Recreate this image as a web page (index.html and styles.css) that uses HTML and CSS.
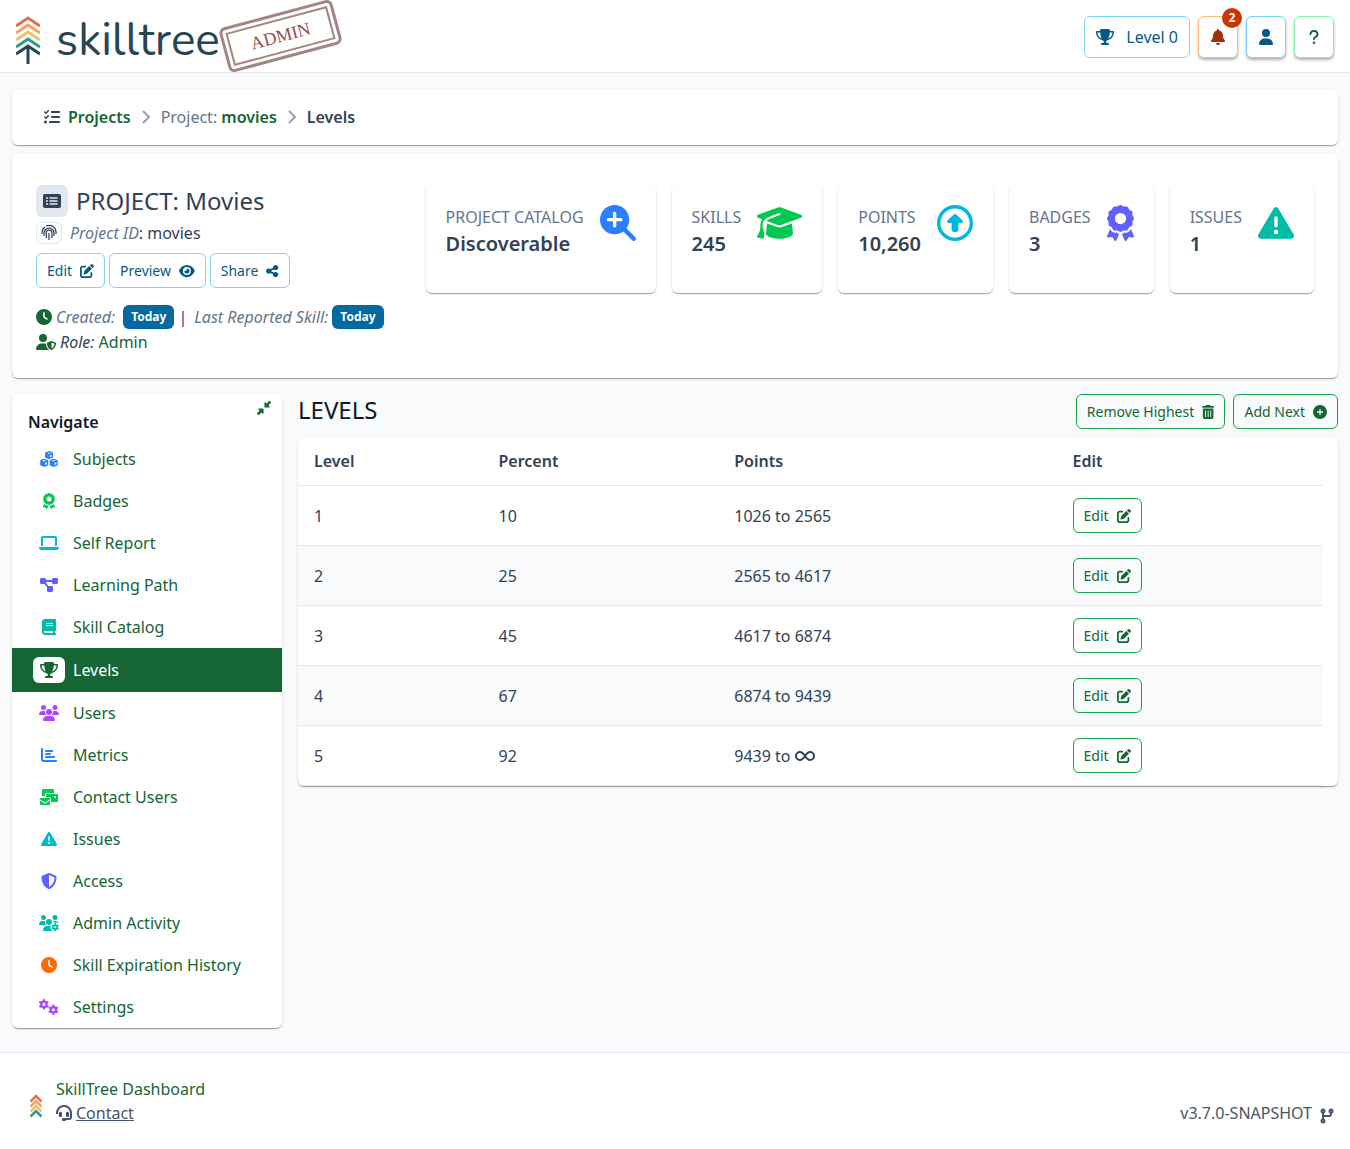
FILE: index.html
```
<!DOCTYPE html>
<html lang="en">
<head>
  <meta charset="UTF-8">
  <title>Levels - SkillTree Dashboard</title>
  <link rel="stylesheet" href="styles.css">
</head>
<body>

  <svg class="sprite" aria-hidden="true">
    <defs>
      <path id="i-trophy" d="M400 0H176c-26.500 0-48.100 21.800-47.100 48.200c.2 5.300 .4 10.600 .7 15.800H24C10.700 64 0 74.700 0 88c0 92.600 33.500 157 78.500 200.700c44.300 43.100 98.300 64.800 138.100 75.800c23.400 6.500 39.400 26 39.400 45.600c0 20.900-17 37.900-37.900 37.900H192c-17.700 0-32 14.300-32 32s14.300 32 32 32H384c17.700 0 32-14.300 32-32s-14.300-32-32-32H357.900C337 448 320 431 320 410.100c0-19.600 15.900-39.200 39.400-45.600c39.900-11 93.900-32.700 138.200-75.800C542.500 245 576 180.600 576 88c0-13.300-10.700-24-24-24H446.400c.3-5.200 .5-10.400 .7-15.800C448.100 21.800 426.500 0 400 0zM48.900 112h84.400c9.100 90.100 29.200 150.300 51.900 190.600c-24.900-11-50.800-26.500-73.200-48.300c-32-31.100-58-76-63-142.300zM464.100 254.300c-22.400 21.800-48.300 37.300-73.200 48.300c22.700-40.300 42.800-100.500 51.900-190.600h84.400c-5.100 66.300-31.100 111.200-63 142.300z"/>
      <path id="i-pen" d="M471.600 21.700c-21.900-21.900-57.300-21.900-79.200 0L362.300 51.700l97.900 97.900 30.100-30.100c21.900-21.900 21.900-57.300 0-79.200L471.600 21.700zm-299.200 220c-6.100 6.100-10.800 13.600-13.500 21.900l-29.600 88.800c-2.900 8.600-.6 18.100 5.800 24.600s15.900 8.700 24.600 5.800l88.800-29.600c8.200-2.700 15.700-7.400 21.900-13.500L437.700 172.300 339.700 74.300 172.400 241.700zM96 64C43 64 0 107 0 160V416c0 53 43 96 96 96H352c53 0 96-43 96-96V320c0-17.700-14.300-32-32-32s-32 14.300-32 32v96c0 17.700-14.300 32-32 32H96c-17.700 0-32-14.300-32-32V160c0-17.700 14.300-32 32-32h96c17.700 0 32-14.300 32-32s-14.300-32-32-32H96z"/>
      <path id="i-award" d="M173.800 5.500c11-7.300 25.400-7.300 36.400 0L228 17.200c6 3.900 13 5.800 20.100 5.400l21.300-1.300c13.200-.8 25.600 6.400 31.500 18.200l9.600 19.100c3.200 6.400 8.400 11.500 14.700 14.700L344.500 83c11.800 5.900 19 18.300 18.200 31.500l-1.300 21.300c-.4 7.100 1.500 14.200 5.400 20.100l11.800 17.800c7.300 11 7.300 25.400 0 36.400L366.800 228c-3.900 6-5.800 13-5.400 20.100l1.300 21.300c.8 13.200-6.400 25.600-18.200 31.500l-19.100 9.600c-6.400 3.200-11.500 8.400-14.700 14.700L301 344.500c-5.900 11.800-18.300 19-31.500 18.200l-21.300-1.300c-7.100-.4-14.200 1.500-20.100 5.400l-17.800 11.800c-11 7.300-25.400 7.300-36.400 0L156 366.800c-6-3.900-13-5.800-20.100-5.400l-21.300 1.300c-13.200 .8-25.600-6.400-31.500-18.200l-9.600-19.100c-3.200-6.400-8.400-11.500-14.700-14.700L39.500 301c-11.800-5.900-19-18.300-18.200-31.500l1.300-21.300c.4-7.100-1.500-14.200-5.400-20.100L5.500 210.200c-7.300-11-7.300-25.400 0-36.400L17.200 156c3.900-6 5.800-13 5.400-20.100l-1.300-21.300c-.8-13.200 6.400-25.600 18.200-31.500l19.100-9.600C65 70.200 70.200 65 73.400 58.600L83 39.500c5.900-11.800 18.300-19 31.500-18.200l21.300 1.300c7.100 .4 14.200-1.500 20.100-5.400L173.800 5.500zM272 192a80 80 0 1 0-160 0 80 80 0 1 0 160 0zM1.300 441.800L44.400 339.300c.2 .1 .3 .2 .4 .4l9.600 19.100c11.700 23.200 36 37.300 62 35.800l21.300-1.300c.2 0 .5 0 .7 .2l17.800 11.800c5.100 3.300 10.500 5.900 16.100 7.700l-37.600 89.300c-2.300 5.500-7.400 9.200-13.300 9.700s-11.600-2.200-14.800-7.200L74.400 455.500l-56.100 8.300c-5.700 .8-11.400-1.500-15-6s-4.300-10.700-2.100-16zm248 60.400L211.700 413c5.600-1.800 11-4.300 16.100-7.700l17.800-11.800c.2-.1 .4-.2 .7-.2l21.300 1.300c26 1.500 50.300-12.600 62-35.800l9.600-19.100c.1-.2 .2-.3 .4-.4l43.200 102.500c2.200 5.300 1.400 11.400-2.100 16s-9.300 6.900-15 6l-56.100-8.300-32.200 49.200c-3.200 5-8.900 7.700-14.800 7.200s-11-4.300-13.300-9.700z"/>
      <path id="i-warning" d="M256 32c14.200 0 27.300 7.500 34.500 19.800l216 368c7.300 12.400 7.300 27.700 .2 40.100S486.300 480 472 480H40c-14.300 0-27.600-7.700-34.700-20.100s-7-27.800 .2-40.100l216-368C228.700 39.500 241.800 32 256 32zm0 128c-13.300 0-24 10.700-24 24V296c0 13.300 10.700 24 24 24s24-10.700 24-24V184c0-13.300-10.700-24-24-24zm32 224a32 32 0 1 0-64 0 32 32 0 1 0 64 0z"/>
      <path id="i-clock" d="M256 0a256 256 0 1 1 0 512A256 256 0 1 1 256 0zM232 120V256c0 8 4 15.500 10.700 20l96 64c11 7.400 25.900 4.400 33.300-6.700s4.400-25.900-6.700-33.300L280 243.200V120c0-13.300-10.700-24-24-24s-24 10.700-24 24z"/>
      <g id="i-gear">
        <circle cx="100" cy="100" r="52" fill="none" stroke="currentColor" stroke-width="44"/>
        <g stroke="currentColor" stroke-width="44" stroke-linecap="round">
          <path d="M100 30V18M100 170V182M39 65L29 59M161 135L171 141M39 135L29 141M161 65L171 59"/>
        </g>
      </g>
      <g id="i-cube">
        <path fill="currentColor" d="M128 0L240 44Q256 52 256 70V192Q256 208 242 216L144 258Q128 264 112 258L14 216Q0 208 0 192V70Q0 52 16 44Z"/>
        <path fill="#fff" d="M128 46L184 68L128 90L72 68ZM156 140L214 116V176L156 202Z"/>
      </g>
      <g id="i-chevrons" fill="none" stroke-width="3">
        <path stroke="#e76f51" d="M0 10L12 2L24 10"/>
        <path stroke="#f4a261" d="M0 17L12 9L24 17"/>
        <path stroke="#e9c46a" d="M0 24L12 16L24 24"/>
        <path stroke="#2a9d8f" d="M0 31L12 23L24 31"/>
      </g>
    </defs>
  </svg>

  <header class="topbar">
    <a class="brand" href="#">
      <svg class="brand-mark" viewBox="0 0 24 48" aria-hidden="true">
        <use href="#i-chevrons"/>
        <path d="M0 38L12 30L24 38M12 31V48" fill="none" stroke="#264653" stroke-width="3"/>
      </svg>
      <span class="brand-name">skilltree</span>
      <span class="stamp"><span>ADMIN</span></span>
    </a>
    <div class="topbar-actions">
      <button type="button" class="btn-top level">
        <svg viewBox="0 0 576 512"><use href="#i-trophy"/></svg>
        Level 0
      </button>
      <button type="button" class="btn-top square alert" aria-label="Notifications">
        <svg viewBox="0 0 448 512"><path d="M224 0c-17.700 0-32 14.300-32 32V51.200C119 66 64 130.600 64 208v18.800c0 47-17.300 92.400-48.500 127.600l-7.400 8.300c-8.400 9.400-10.400 22.900-5.300 34.400S19.400 416 32 416H416c12.600 0 24-7.400 29.200-18.900s3.100-25-5.300-34.400l-7.400-8.300C401.300 319.200 384 273.900 384 226.800V208c0-77.400-55-142-128-156.800V32c0-17.700-14.300-32-32-32zm45.300 493.300c12-12 18.700-28.300 18.700-45.300H160c0 17 6.700 33.300 18.700 45.300s28.300 18.700 45.300 18.700s33.300-6.700 45.300-18.700z"/></svg>
        <span class="count">2</span>
      </button>
      <button type="button" class="btn-top square" aria-label="User">
        <svg viewBox="0 0 448 512"><path d="M224 256A128 128 0 1 0 224 0a128 128 0 1 0 0 256zm-45.700 48C79.800 304 0 383.800 0 482.300C0 498.700 13.300 512 29.700 512H418.300c16.400 0 29.700-13.300 29.700-29.700C448 383.800 368.200 304 269.700 304H178.300z"/></svg>
      </button>
      <button type="button" class="btn-top square help" aria-label="Help">
        <svg viewBox="0 0 320 512"><path d="M80 160c0-35.300 28.700-64 64-64h32c35.300 0 64 28.700 64 64v3.600c0 21.800-11.100 42.100-29.400 53.800l-42.200 27.100c-25.200 16.200-40.400 44.100-40.400 74V320c0 17.700 14.300 32 32 32s32-14.300 32-32v-1.400c0-8.200 4.200-15.800 11-20.200l42.200-27.100c36.600-23.600 58.800-64.100 58.800-107.700V160c0-70.700-57.300-128-128-128H144C73.300 32 16 89.300 16 160c0 17.700 14.300 32 32 32s32-14.300 32-32zm80 320a40 40 0 1 0 0-80 40 40 0 1 0 0 80z"/></svg>
      </button>
    </div>
  </header>

  <nav class="card breadcrumb" aria-label="Breadcrumb">
    <svg viewBox="0 0 512 512"><path d="M152.100 38.200c9.900 8.900 10.700 24 1.800 33.900l-72 80c-4.400 4.900-10.600 7.800-17.200 7.900s-12.900-2.400-17.600-7L7 113C-2.300 103.600-2.300 88.400 7 79s24.600-9.400 33.900 0l22.100 22.100 55.100-61.200c8.900-9.900 24-10.700 33.900-1.800zm0 160c9.900 8.900 10.700 24 1.800 33.900l-72 80c-4.400 4.900-10.600 7.800-17.200 7.900s-12.900-2.400-17.600-7L7 273c-9.400-9.400-9.400-24.600 0-33.900s24.600-9.400 33.900 0l22.100 22.100 55.100-61.200c8.900-9.900 24-10.700 33.900-1.800zM224 96c0-17.700 14.300-32 32-32H480c17.700 0 32 14.300 32 32s-14.300 32-32 32H256c-17.700 0-32-14.300-32-32zm0 160c0-17.700 14.300-32 32-32H480c17.700 0 32 14.300 32 32s-14.300 32-32 32H256c-17.700 0-32-14.300-32-32zM160 416c0-17.700 14.300-32 32-32H480c17.700 0 32 14.300 32 32s-14.300 32-32 32H192c-17.700 0-32-14.300-32-32zM48 368a48 48 0 1 1 0 96 48 48 0 1 1 0-96z"/></svg>
    <a href="#">Projects</a>
    <svg class="sep" viewBox="0 0 8 14"><path d="M1 1L7 7L1 13"/></svg>
    <span class="crumb">Project: <a href="#">movies</a></span>
    <svg class="sep" viewBox="0 0 8 14"><path d="M1 1L7 7L1 13"/></svg>
    <span>Levels</span>
  </nav>

  <section class="card project">
    <div class="project-info">
      <h1>
        <span class="title-icon"><svg viewBox="0 0 576 512"><path fill-rule="evenodd" d="M0 96C0 60.700 28.700 32 64 32H512c35.300 0 64 28.700 64 64V416c0 35.300-28.700 64-64 64H64c-35.300 0-64-28.700-64-64V96zM128 288a32 32 0 1 0 0-64 32 32 0 1 0 0 64zm32-128a32 32 0 1 0-64 0 32 32 0 1 0 64 0zM128 384a32 32 0 1 0 0-64 32 32 0 1 0 0 64zM224 136c-13.300 0-24 10.700-24 24s10.700 24 24 24H448c13.300 0 24-10.700 24-24s-10.700-24-24-24zM224 232c-13.300 0-24 10.700-24 24s10.700 24 24 24H448c13.300 0 24-10.700 24-24s-10.700-24-24-24zM224 328c-13.300 0-24 10.700-24 24s10.700 24 24 24H448c13.300 0 24-10.700 24-24s-10.700-24-24-24z"/></svg></span>
        PROJECT: Movies
      </h1>
      <div class="project-id">
        <span class="id-icon">
          <svg viewBox="0 0 16 16"><path class="line" d="M1 9V7A7 7 0 0 1 4 2M5 1A7 7 0 0 1 15 7V9M3 11V8A5 5 0 0 1 8 3A5 5 0 0 1 13 8V11M5 13Q6 11 5 8A3 3 0 0 1 11 8V13M8 8V15"/></svg>
        </span>
        <span><em>Project ID</em>: movies</span>
      </div>
      <div class="project-actions">
        <button type="button" class="btn sky">Edit <svg viewBox="0 0 512 512"><use href="#i-pen"/></svg></button>
        <button type="button" class="btn sky">Preview <svg viewBox="0 0 576 512"><path d="M288 32c-80.800 0-145.500 36.800-192.600 80.600C48.600 156 17.300 208 2.500 243.700c-3.300 7.900-3.300 16.700 0 24.600C17.300 304 48.600 356 95.400 399.400C142.500 443.200 207.200 480 288 480s145.500-36.800 192.600-80.600c46.800-43.500 78.100-95.400 93-131.100c3.300-7.900 3.300-16.700 0-24.600c-14.900-35.700-46.200-87.700-93-131.100C433.500 68.800 368.800 32 288 32zM144 256a144 144 0 1 1 288 0 144 144 0 1 1-288 0zm144-64c0 35.300-28.700 64-64 64c-7.100 0-13.900-1.200-20.300-3.300c-5.500-1.800-11.900 1.600-11.700 7.400c.3 6.900 1.300 13.800 3.200 20.700c13.700 51.200 66.400 81.600 117.600 67.900s81.600-66.400 67.900-117.600c-11.100-41.500-47.800-69.400-88.600-71.100c-5.800-.2-9.200 6.100-7.400 11.700c2.100 6.400 3.300 13.200 3.300 20.300z"/></svg></button>
        <button type="button" class="btn sky">Share <svg viewBox="0 0 448 512"><path d="M352 224c53 0 96-43 96-96s-43-96-96-96s-96 43-96 96c0 4 .2 8 .7 11.900l-94.100 47C145.400 170.200 121.900 160 96 160c-53 0-96 43-96 96s43 96 96 96c25.900 0 49.400-10.200 66.600-26.900l94.100 47c-.5 3.900-.7 7.800-.7 11.900c0 53 43 96 96 96s96-43 96-96s-43-96-96-96c-25.900 0-49.400 10.200-66.600 26.900l-94.100-47c.5-3.900 .7-7.800 .7-11.900s-.2-8-.7-11.900l94.100-47C302.600 213.800 326.100 224 352 224z"/></svg></button>
      </div>
      <div class="project-dates">
        <svg class="green" viewBox="0 0 512 512"><use href="#i-clock"/></svg>
        <em class="created">Created:</em>
        <span class="tag">Today</span>
        <span class="bar">|</span>
        <em>Last Reported Skill:</em>
        <span class="tag">Today</span>
      </div>
      <div class="project-role">
        <svg class="green" viewBox="0 0 640 512"><path d="M224 256A128 128 0 1 0 224 0a128 128 0 1 0 0 256zm-45.700 48C79.800 304 0 383.800 0 482.300C0 498.700 13.300 512 29.700 512H418.300c1.800 0 3.500-.2 5.300-.5c-76.300-55.100-99.800-141-103.100-200.200c-16.100-4.800-33.100-7.300-50.700-7.300H178.300zm308.800-78.300l-120 48C358 277.400 352 286.200 352 296c0 63.300 25.900 168.800 134.800 214.200c5.900 2.500 12.600 2.500 18.500 0C614.100 464.800 640 359.300 640 296c0-9.800-6-18.600-15.100-22.300l-120-48c-5.700-2.300-12.100-2.300-17.800 0zM591.400 312c-3.900 50.700-27.200 116.700-95.400 149.700V273.800L591.400 312z"/></svg>
        <span><i>Role:</i> <span class="green">Admin</span></span>
      </div>
    </div>

    <div class="stats">
      <div class="stat">
        <div><span>PROJECT CATALOG</span><strong>Discoverable</strong></div>
        <svg class="blue" viewBox="0 0 512 512"><path d="M416 208c0 45.900-14.900 88.300-40 122.700L502.600 457.400c12.500 12.500 12.500 32.800 0 45.300s-32.800 12.500-45.300 0L330.700 376c-34.400 25.200-76.800 40-122.700 40C93.100 416 0 322.900 0 208S93.100 0 208 0S416 93.100 416 208zM184 296c0 13.300 10.700 24 24 24s24-10.700 24-24V232h64c13.300 0 24-10.700 24-24s-10.700-24-24-24H232V120c0-13.300-10.700-24-24-24s-24 10.700-24 24v64H120c-13.300 0-24 10.700-24 24s10.700 24 24 24h64v64z"/></svg>
      </div>
      <div class="stat">
        <div><span>SKILLS</span><strong>245</strong></div>
        <svg class="lime" viewBox="0 0 640 512"><path d="M320 32c-8.100 0-16.100 1.400-23.700 4.100L15.800 137.400C6.300 140.900 0 149.900 0 160s6.300 19.100 15.800 22.600l57.900 20.900C57.300 229.300 48 259.800 48 291.900v28.100c0 28.400-10.800 57.700-22.300 80.800c-6.500 13-13.900 25.800-22.500 37.600C0 442.700-.9 448.300 .9 453.400s6 8.900 11.200 10.200l64 16c4.200 1.100 8.700 .3 12.400-2s6.300-6.100 7.100-10.400c8.600-42.800 4.300-81.200-2.100-108.700C90.300 344.300 86 329.800 80 316.500V291.900c0-30.200 10.200-58.700 27.900-81.500c12.900-15.500 29.600-28 49.200-35.700l157-61.700c8.200-3.200 17.500 .8 20.700 9s-.8 17.500-9 20.700l-157 61.700c-12.400 4.900-23.300 12.400-32.200 21.600l159.600 57.600c7.600 2.700 15.600 4.100 23.700 4.100s16.100-1.400 23.700-4.100L624.200 182.600c9.500-3.400 15.800-12.500 15.800-22.600s-6.300-19.100-15.800-22.600L343.700 36.100C336.100 33.400 328.100 32 320 32zM128 408c0 35.300 86 72 192 72s192-36.700 192-72L496.700 262.600 354.500 314c-11.100 4-22.800 6-34.500 6s-23.500-2-34.500-6L143.300 262.600 128 408z"/></svg>
      </div>
      <div class="stat">
        <div><span>POINTS</span><strong>10,260</strong></div>
        <svg class="cyan" viewBox="0 0 512 512"><path d="M256 48a208 208 0 1 1 0 416 208 208 0 1 1 0-416zm0 464A256 256 0 1 0 256 0a256 256 0 1 0 0 512zM151.200 217.400c-4.600 4.200-7.200 10.100-7.200 16.400c0 12.300 10 22.300 22.300 22.300H208v96c0 17.700 14.300 32 32 32h32c17.700 0 32-14.300 32-32V256h41.700c12.300 0 22.300-10 22.300-22.300c0-6.200-2.600-12.100-7.200-16.400l-91-84c-3.800-3.500-8.700-5.400-13.900-5.400s-10.100 1.900-13.900 5.400l-91 84z"/></svg>
      </div>
      <div class="stat">
        <div><span>BADGES</span><strong>3</strong></div>
        <svg class="indigo" viewBox="0 0 384 512"><use href="#i-award"/></svg>
      </div>
      <div class="stat">
        <div><span>ISSUES</span><strong>1</strong></div>
        <svg class="teal" viewBox="0 0 512 512"><use href="#i-warning"/></svg>
      </div>
    </div>
  </section>

  <div class="content">
    <aside class="card sidebar">
      <button type="button" class="collapse" aria-label="Collapse navigation">
        <svg viewBox="0 0 512 512"><path d="M439 7c9.400-9.400 24.600-9.400 33.900 0l32 32c9.400 9.400 9.400 24.600 0 33.900l-87 87 39 39c6.900 6.900 8.900 17.200 5.200 26.200s-12.500 14.800-22.200 14.800H296c-13.300 0-24-10.700-24-24V72c0-9.700 5.800-18.500 14.800-22.200s19.300-1.700 26.200 5.200l39 39L439 7zM72 272H216c13.300 0 24 10.700 24 24V440c0 9.700-5.800 18.500-14.800 22.200s-19.300 1.700-26.200-5.200l-39-39L73 505c-9.400 9.400-24.600 9.400-33.900 0L7 473c-9.400-9.400-9.400-24.600 0-33.900l87-87L55 313c-6.900-6.900-8.900-17.200-5.200-26.200s12.500-14.800 22.200-14.800z"/></svg>
      </button>
      <h2>Navigate</h2>
      <ul>
        <li><a href="#"><span class="nav-icon blue"><svg viewBox="0 0 576 512"><use href="#i-cube" x="160" y="0"/><use href="#i-cube" x="8" y="244"/><use href="#i-cube" x="312" y="244"/></svg></span>Subjects</a></li>
        <li><a href="#"><span class="nav-icon lime"><svg viewBox="0 0 384 512"><use href="#i-award"/></svg></span>Badges</a></li>
        <li><a href="#"><span class="nav-icon cyan"><svg viewBox="0 0 640 512"><path d="M128 32C92.700 32 64 60.700 64 96V352h64V96H512V352h64V96c0-35.300-28.700-64-64-64H128zM19.200 384C8.600 384 0 392.600 0 403.200C0 445.600 34.400 480 76.800 480H563.200c42.400 0 76.800-34.400 76.800-76.800c0-10.600-8.600-19.200-19.200-19.200H19.200z"/></svg></span>Self Report</a></li>
        <li><a href="#"><span class="nav-icon indigo"><svg viewBox="0 0 576 512"><path d="M0 80C0 53.500 21.500 32 48 32h96c26.500 0 48 21.500 48 48V96H384V80c0-26.500 21.500-48 48-48h96c26.500 0 48 21.500 48 48v96c0 26.500-21.500 48-48 48H432c-26.500 0-48-21.500-48-48V160H192v16c0 1.700-.1 3.400-.3 5L272 288h96c26.500 0 48 21.500 48 48v96c0 26.500-21.500 48-48 48H272c-26.500 0-48-21.500-48-48V336c0-1.700 .1-3.400 .3-5L144 224H48c-26.500 0-48-21.500-48-48V80z"/></svg></span>Learning Path</a></li>
        <li><a href="#"><span class="nav-icon teal"><svg viewBox="0 0 448 512"><path d="M96 0C43 0 0 43 0 96V416c0 53 43 96 96 96H384h32c17.700 0 32-14.300 32-32s-14.300-32-32-32V384c17.700 0 32-14.300 32-32V32c0-17.700-14.300-32-32-32H384 96zm0 384H352v64H96c-17.700 0-32-14.300-32-32s14.300-32 32-32zm32-240c0-8.800 7.200-16 16-16H336c8.800 0 16 7.200 16 16s-7.200 16-16 16H144c-8.800 0-16-7.200-16-16zm16 48H336c8.800 0 16 7.200 16 16s-7.200 16-16 16H144c-8.800 0-16-7.200-16-16s7.200-16 16-16z"/></svg></span>Skill Catalog</a></li>
        <li class="active"><a href="#"><span class="nav-icon"><svg viewBox="0 0 576 512"><use href="#i-trophy"/></svg></span>Levels</a></li>
        <li><a href="#"><span class="nav-icon purple"><svg viewBox="0 0 640 512"><path d="M144 0a80 80 0 1 1 0 160A80 80 0 1 1 144 0zM512 0a80 80 0 1 1 0 160A80 80 0 1 1 512 0zM0 298.700C0 239.800 47.800 192 106.700 192h42.700c15.900 0 31 3.500 44.600 9.700c-1.300 7.200-1.900 14.700-1.900 22.300c0 38.200 16.800 72.500 43.300 96H21.300C9.600 320 0 310.400 0 298.700zM405.300 320c26.600-23.500 43.300-57.800 43.300-96c0-7.600-.7-15-1.900-22.300c13.600-6.300 28.700-9.700 44.600-9.700h42.700C592.200 192 640 239.800 640 298.700c0 11.800-9.600 21.300-21.300 21.300H405.300zM224 224a96 96 0 1 1 192 0 96 96 0 1 1-192 0zM128 485.300C128 411.700 187.700 352 261.300 352H378.700C452.300 352 512 411.700 512 485.300c0 14.700-11.900 26.700-26.700 26.700H154.700c-14.700 0-26.700-11.900-26.700-26.700z"/></svg></span>Users</a></li>
        <li><a href="#"><span class="nav-icon blue"><svg viewBox="0 0 512 512"><path d="M32 32c17.700 0 32 14.300 32 32V400c0 8.800 7.200 16 16 16H480c17.700 0 32 14.300 32 32s-14.300 32-32 32H80c-44.200 0-80-35.800-80-80V64C0 46.300 14.300 32 32 32zm96 96c0-17.700 14.300-32 32-32l192 0c17.700 0 32 14.300 32 32s-14.300 32-32 32H160c-17.700 0-32-14.300-32-32zm32 64H288c17.700 0 32 14.300 32 32s-14.300 32-32 32H160c-17.700 0-32-14.300-32-32s14.300-32 32-32zm0 96H416c17.700 0 32 14.300 32 32s-14.300 32-32 32H160c-17.700 0-32-14.300-32-32s14.300-32 32-32z"/></svg></span>Metrics</a></li>
        <li><a href="#"><span class="nav-icon lime"><svg viewBox="0 0 576 512"><path d="M96 0H416Q448 0 448 32V128H224Q160 128 160 192V224H64V32Q64 0 96 0ZM224 160H544Q576 160 576 192V384Q576 416 544 416H352V320Q352 256 288 256H192V192Q192 160 224 160ZM448 224V288H512V224ZM0 288H320V326L180 424Q160 436 140 424L0 326ZM0 364L122 450Q160 472 198 450L320 364V480Q320 512 288 512H32Q0 512 0 480Z"/></svg></span>Contact Users</a></li>
        <li><a href="#"><span class="nav-icon cyan"><svg viewBox="0 0 512 512"><use href="#i-warning"/></svg></span>Issues</a></li>
        <li><a href="#"><span class="nav-icon indigo"><svg viewBox="0 0 512 512"><path d="M256 0c4.600 0 9.200 1 13.400 2.900L457.700 82.800c22 9.300 38.400 31 38.300 57.200c-.5 99.200-41.300 280.700-213.600 363.200c-16.700 8-36.100 8-52.800 0C57.300 420.700 16.500 239.200 16 140c-.1-26.200 16.300-47.900 38.300-57.200L242.700 2.900C246.800 1 251.400 0 256 0zm0 66.800V444.800C394 378 431.100 230.100 432 141.400L256 66.800z"/></svg></span>Access</a></li>
        <li><a href="#"><span class="nav-icon teal"><svg viewBox="0 0 640 512"><path d="M144 0a80 80 0 1 1 0 160A80 80 0 1 1 144 0zM512 0a80 80 0 1 1 0 160A80 80 0 1 1 512 0zM0 298.700C0 239.800 47.800 192 106.700 192h42.700c15.900 0 31 3.500 44.600 9.700c-1.300 7.200-1.900 14.700-1.900 22.300c0 38.200 16.800 72.500 43.300 96H21.300C9.600 320 0 310.400 0 298.700zM448 216c-1-5 0-10-1-15c13-6 28-9 44-9h43c48 0 90 32 102 76c-30-22-90-34-130-14c-20-14-40-20-58-38zM224 224a96 96 0 1 1 192 0 96 96 0 1 1-192 0zM128 485.300C128 411.700 187.700 352 261.300 352H378c-18 60 0 130 50 160H154.700c-14.700 0-26.700-11.900-26.700-26.700z"/><use href="#i-gear" transform="translate(396 264) scale(1.240)"/></svg></span>Admin Activity</a></li>
        <li><a href="#"><span class="nav-icon orange"><svg viewBox="0 0 512 512"><use href="#i-clock"/></svg></span>Skill Expiration History</a></li>
        <li><a href="#"><span class="nav-icon purple"><svg viewBox="0 0 640 512"><use href="#i-gear" transform="translate(-8 8) scale(1.640)"/><use href="#i-gear" transform="translate(296 180) scale(1.640)"/></svg></span>Settings</a></li>
      </ul>
    </aside>

    <main>
      <div class="page-header">
        <h2>LEVELS</h2>
        <button type="button" class="btn">Remove Highest <svg viewBox="0 0 448 512"><path fill-rule="evenodd" d="M135.200 17.700L128 32H32C14.300 32 0 46.300 0 64S14.300 96 32 96H416c17.700 0 32-14.300 32-32s-14.300-32-32-32H320l-7.200-14.300C307.400 6.800 296.300 0 284.200 0H163.800c-12.100 0-23.200 6.800-28.600 17.700zM416 128H32V448c0 35.300 28.700 64 64 64H352c35.300 0 64-28.700 64-64V128zM144 208V432a16 16 0 0 1-32 0V208a16 16 0 0 1 32 0zM240 208V432a16 16 0 0 1-32 0V208a16 16 0 0 1 32 0zM336 208V432a16 16 0 0 1-32 0V208a16 16 0 0 1 32 0z"/></svg></button>
        <button type="button" class="btn">Add Next <svg viewBox="0 0 512 512"><path d="M256 512A256 256 0 1 0 256 0a256 256 0 1 0 0 512zM232 344V280H168c-13.300 0-24-10.700-24-24s10.700-24 24-24h64V168c0-13.300 10.700-24 24-24s24 10.700 24 24v64h64c13.300 0 24 10.700 24 24s-10.700 24-24 24H280v64c0 13.300-10.700 24-24 24s-24-10.700-24-24z"/></svg></button>
      </div>
      <div class="card table-card">
        <table>
          <thead>
            <tr><th class="col-level">Level</th><th class="col-percent">Percent</th><th class="col-points">Points</th><th>Edit</th></tr>
          </thead>
          <tbody>
            <tr><td>1</td><td>10</td><td>1026 to 2565</td><td><button type="button" class="btn">Edit <svg viewBox="0 0 512 512"><use href="#i-pen"/></svg></button></td></tr>
            <tr><td>2</td><td>25</td><td>2565 to 4617</td><td><button type="button" class="btn">Edit <svg viewBox="0 0 512 512"><use href="#i-pen"/></svg></button></td></tr>
            <tr><td>3</td><td>45</td><td>4617 to 6874</td><td><button type="button" class="btn">Edit <svg viewBox="0 0 512 512"><use href="#i-pen"/></svg></button></td></tr>
            <tr><td>4</td><td>67</td><td>6874 to 9439</td><td><button type="button" class="btn">Edit <svg viewBox="0 0 512 512"><use href="#i-pen"/></svg></button></td></tr>
            <tr><td>5</td><td>92</td><td>9439 to <svg class="infinity" viewBox="0 0 20 16"><path d="M10 8C8 5 7 4 5 4A4 4 0 0 0 5 12C7 12 8 11 10 8C12 5 13 4 15 4A4 4 0 0 1 15 12C13 12 12 11 10 8Z"/></svg></td><td><button type="button" class="btn">Edit <svg viewBox="0 0 512 512"><use href="#i-pen"/></svg></button></td></tr>
          </tbody>
        </table>
      </div>
    </main>
  </div>

  <footer>
    <svg class="footer-mark" viewBox="0 0 24 48" aria-hidden="true">
      <g fill="none" stroke-width="5">
        <path stroke="#e76f51" d="M1 15L12 4L23 15"/>
        <path stroke="#f4a261" d="M1 25L12 14L23 25"/>
        <path stroke="#e9c46a" d="M1 35L12 24L23 35"/>
        <path stroke="#2a9d8f" d="M1 45L12 34L23 45"/>
      </g>
    </svg>
    <div class="footer-links">
      <a href="#">SkillTree Dashboard</a>
      <div class="contact">
        <svg viewBox="0 0 16 16"><path class="line" d="M1 9V8A7 7 0 0 1 15 8V12Q15 14 13 14H9"/><rect x="3" y="7" width="3" height="5" rx="1"/><rect x="10" y="7" width="3" height="5" rx="1"/><rect x="6" y="13" width="4" height="3" rx="1"/></svg>
        <a href="#">Contact</a>
      </div>
    </div>
    <div class="version">v3.7.0-SNAPSHOT
      <svg viewBox="0 0 14 16"><path class="line" d="M3 5V11M11 5V6Q11 8 9 8H3"/><circle class="line" cx="3" cy="3" r="1.500"/><circle class="line" cx="11" cy="3" r="1.500"/><circle class="line" cx="3" cy="13" r="1.500"/></svg>
    </div>
  </footer>

</body>
</html>
```
FILE: styles.css
```
* {
  box-sizing: border-box;
}
body {
  margin: 0;
  min-height: 100vh;
  display: flex;
  flex-direction: column;
  background: #f8fafc;
  color: #334155;
  font-family: "Noto Sans", sans-serif;
  font-size: 16px;
  line-height: 24px;
}
h1, h2, ul {
  margin: 0;
  padding: 0;
}
h1, h2 {
  font-weight: 400;
}
a {
  color: #166534;
  text-decoration: none;
}
button {
  font: inherit;
  cursor: pointer;
}
svg {
  height: 16px;
  flex: none;
  fill: currentColor;
}
.sprite {
  display: none;
}
.line {
  fill: none;
  stroke: currentColor;
  stroke-width: 2;
}
.blue { color: #2b7fff; }
.lime { color: #00c951; }
.cyan { color: #00b8db; }
.indigo { color: #615fff; }
.teal { color: #00bba7; }
.purple { color: #ad46ff; }
.orange { color: #ff6900; }
.green { color: #166534; }

.card {
  background: #fff;
  border-radius: 6px;
  box-shadow: 0 2px 1px -1px rgba(0, 0, 0, 0.2), 0 1px 1px rgba(0, 0, 0, 0.14), 0 1px 3px rgba(0, 0, 0, 0.12);
}

/* top bar */
.topbar {
  display: flex;
  justify-content: space-between;
  align-items: center;
  height: 73px;
  padding: 0 16px;
  background: #fff;
  border-bottom: 1px solid #e2e8f0;
}
.brand {
  display: flex;
  align-items: center;
}
.brand-mark {
  height: 48px;
  margin-top: 8px;
}
.brand-name {
  margin: 8px 0 0 16px;
  color: #264653;
  font-family: "Nunito", "Noto Sans", sans-serif;
  font-size: 46px;
}
.stamp {
  margin-left: 2px;
  padding: 3px;
  border: 3px solid #a38583;
  border-radius: 6px;
  transform: rotate(-15deg);
}
.stamp span {
  display: block;
  padding: 3px 20px;
  border: 2px solid #a38583;
  color: #964b4b;
  font-family: "Liberation Serif", serif;
  font-size: 18px;
}
.topbar-actions {
  display: flex;
  gap: 8px;
  margin-top: 2px;
}
.btn-top {
  position: relative;
  display: flex;
  align-items: center;
  justify-content: center;
  height: 42px;
  padding: 0 11px;
  background: #fff;
  border: 1px solid #7dd3fc;
  border-radius: 6px;
  color: #075985;
}
.level {
  gap: 12px;
}
.square {
  width: 40px;
  padding: 0;
  box-shadow: 0 2px 3px rgba(0, 0, 0, 0.3);
}
.alert {
  border-color: #fdba74;
  color: #9a3412;
}
.help {
  border-color: #86efac;
  color: #166534;
}
.count {
  position: absolute;
  top: -9px;
  right: -5px;
  width: 20px;
  border-radius: 10px;
  background: #ca3500;
  color: #fff;
  font-size: 12px;
  font-weight: 700;
  line-height: 20px;
  text-align: center;
}

/* breadcrumb */
.breadcrumb {
  display: flex;
  align-items: center;
  gap: 8px;
  margin: 16px 12px 8px;
  padding: 16px 32px;
  font-weight: 600;
}
.breadcrumb .sep {
  height: 14px;
  margin: 0 3px;
  fill: none;
  stroke: #94a3b8;
  stroke-width: 2;
}
.crumb {
  color: #64748b;
  font-weight: 400;
}
.crumb a {
  font-weight: 600;
}

/* project */
.project {
  display: flex;
  justify-content: space-between;
  gap: 24px;
  margin: 0 12px;
  padding: 32px 24px 24px;
}
.project h1 {
  display: flex;
  align-items: center;
  gap: 8px;
  font-size: 24px;
  line-height: 32px;
}
.title-icon {
  display: flex;
  align-items: center;
  justify-content: center;
  width: 32px;
  height: 32px;
  border-radius: 6px;
  background: #e2e8f0;
}
.project em {
  color: #64748b;
}
.project-id {
  display: flex;
  align-items: center;
  gap: 8px;
  margin-top: 4px;
}
.id-icon {
  display: flex;
  padding: 2px 4px;
  border: 1px solid #e2e8f0;
  border-radius: 6px;
}
.id-icon .line {
  stroke-width: 1.250;
}
.project-actions {
  display: flex;
  gap: 4px;
  margin-top: 8px;
}
.btn {
  display: inline-flex;
  align-items: center;
  gap: 8px;
  height: 35px;
  padding: 0 10px;
  background: transparent;
  border: 1px solid #16a34a;
  border-radius: 6px;
  color: #166534;
  font-size: 14px;
  line-height: 20px;
}
.btn svg {
  height: 14px;
}
.sky {
  border-color: #7dd3fc;
  color: #075985;
}
.project-dates {
  display: flex;
  align-items: center;
  gap: 4px;
  margin-top: 17px;
}
.created {
  margin-right: 4px;
}
.tag {
  padding: 0 8px;
  border-radius: 6px;
  background: #0369a1;
  color: #fff;
  font-size: 12px;
  font-weight: 700;
}
.bar {
  margin-right: 3px;
}
.project-role {
  display: flex;
  align-items: center;
  gap: 4px;
  margin-top: 1px;
}
.stats {
  display: flex;
  gap: 16px;
}
.stat {
  display: flex;
  gap: 16px;
  height: 108px;
  padding: 20px;
  border-radius: 6px;
  box-shadow: 0 2px 1px -1px rgba(0, 0, 0, 0.2), 0 1px 1px rgba(0, 0, 0, 0.14), 0 1px 3px rgba(0, 0, 0, 0.12);
}
.stat span,
.stat strong {
  display: block;
  white-space: nowrap;
}
.stat span {
  color: #64748b;
}
.stat strong {
  font-size: 20px;
  font-weight: 600;
  line-height: 30px;
}
.stat svg {
  height: 36px;
}

/* navigation and levels */
.content {
  display: flex;
  align-items: flex-start;
  gap: 16px;
  margin: 16px 12px 24px;
}
.sidebar {
  position: relative;
  flex: none;
  width: 270px;
}
.collapse {
  position: absolute;
  top: 7px;
  right: 11px;
  display: flex;
  padding: 0;
  border: 0;
  background: none;
  color: #166534;
}
.collapse svg {
  height: 14px;
}
.sidebar h2 {
  padding: 16px 16px 4px;
  color: #0f172a;
  font-size: 16px;
  font-weight: 600;
}
.sidebar ul {
  list-style: none;
}
.sidebar a {
  display: flex;
  align-items: center;
  gap: 8px;
  height: 42px;
  padding-left: 21px;
}
.nav-icon {
  display: flex;
  align-items: center;
  justify-content: center;
  width: 32px;
  height: 26px;
}
.sidebar .active a {
  height: 44px;
  background: #166534;
  color: #fff;
}
.active .nav-icon {
  border-radius: 6px;
  background: #fff;
  color: #166534;
}
main {
  flex: 1;
}
.page-header {
  display: flex;
  align-items: flex-start;
  gap: 8px;
  margin-bottom: 8px;
}
.page-header h2 {
  margin-right: auto;
  color: #0f172a;
  font-size: 24px;
  line-height: 32px;
}
.table-card {
  padding-right: 15px;
  overflow: hidden;
}
table {
  width: 100%;
  border-collapse: separate;
  border-spacing: 0;
}
th, td {
  padding: 12px 16px;
  border-bottom: 1px solid #e2e8f0;
  text-align: left;
}
th {
  font-weight: 600;
}
td {
  height: 60px;
  padding: 0 16px;
}
tbody tr:nth-child(even) {
  background: #f8fafc;
}
.col-level { width: 18%; }
.col-percent { width: 23%; }
.col-points { width: 33%; }
td .btn {
  vertical-align: middle;
}
.infinity {
  vertical-align: -2px;
}
.infinity path {
  fill: none;
  stroke: currentColor;
  stroke-width: 2;
}

/* footer */
footer {
  display: flex;
  flex: 1;
  align-items: flex-start;
  padding: 24px 16px;
  background: #fff;
  border-top: 1px solid #e2e8f0;
  color: #475569;
}
.footer-mark {
  height: 24px;
  margin: 17px 14px 0;
}
.contact {
  display: flex;
  align-items: center;
  gap: 4px;
}
.contact a {
  color: #475569;
  text-decoration: underline;
}
.version {
  display: flex;
  align-items: center;
  gap: 8px;
  margin: 24px 0 0 auto;
}
.version svg {
  margin-top: 6px;
}
```
